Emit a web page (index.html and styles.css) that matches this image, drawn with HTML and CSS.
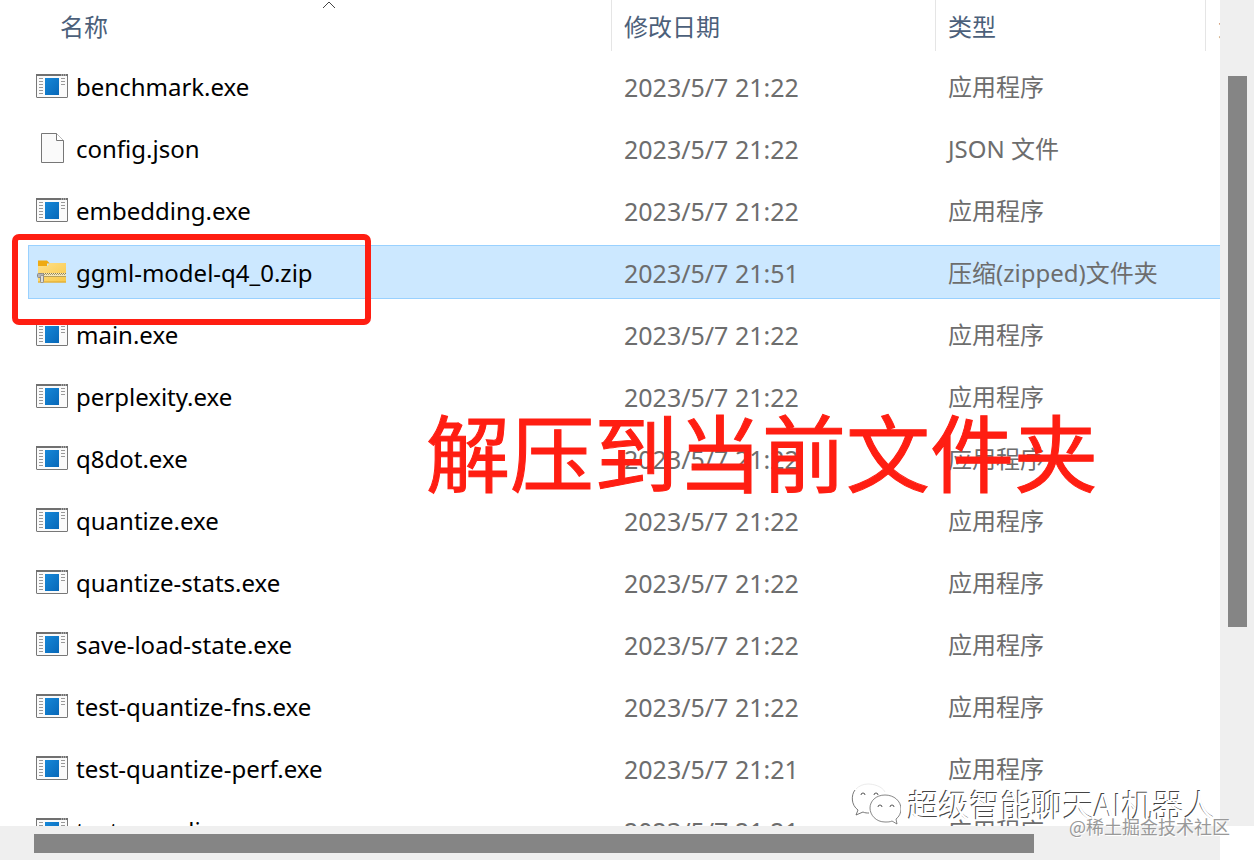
FILE: index.html
```html
<!DOCTYPE html>
<html lang="zh-CN">
<head>
<meta charset="utf-8">
<title>文件列表</title>
<link rel="stylesheet" href="styles.css">
</head>
<body>
<svg class="sprite" aria-hidden="true">
  <defs>
    <linearGradient id="blue" x1="0" y1="0" x2="1" y2="1"><stop offset="0" stop-color="#1688d9"/><stop offset="1" stop-color="#0868b8"/></linearGradient>
    <linearGradient id="gold" x1="0" y1="0" x2="1" y2="1"><stop offset="0" stop-color="#ffe08a"/><stop offset="1" stop-color="#f8c849"/></linearGradient>
    <symbol id="exe" viewBox="0 0 32 32">
      <rect x="0.5" y="4.5" width="31" height="23" rx="0.5" fill="#fafafa" stroke="#777"/>
      <path d="M0 5h32" stroke="#707070" stroke-width="2"/>
      <path d="M25 5h1M27 5h1M29 5h1" stroke="#ddd"/>
      <path d="M3 8.500h4M3 11.500h4M3 14.500h4M3 17.500h4M3 20.500h4M3 23.500h4M25 8.500h4M25 11.500h4M25 14.500h4" stroke="#999"/>
      <rect x="9" y="8" width="14" height="17" fill="url(#blue)"/>
    </symbol>
    <symbol id="doc" viewBox="0 0 32 32">
      <path d="M5.500 1.500h15l7 7v22h-22z" fill="#fafafa" stroke="#777"/>
      <path d="M20.500 1.500v7h7" fill="#fff" stroke="#777"/>
    </symbol>
    <symbol id="zip" viewBox="0 0 32 32">
      <path d="M2 4.500h9l3 3h-3v5H2z" fill="#efaa12"/>
      <path d="M2 10h9l3-3h16v19.500H2z" fill="url(#gold)"/>
      <path d="M2 26h28" stroke="#dba52c"/>
      <path d="M6 19h24" stroke="#f4e7bd" stroke-width="4"/>
      <path d="M7 17.500h23" stroke="#8d8054" stroke-dasharray="1 1"/>
      <path d="M8 18.500h22" stroke="#a89a68" stroke-dasharray="1 1"/>
      <path d="M7 20.500h23" stroke="#b6a15c"/>
      <rect x="1.500" y="17.500" width="6" height="4" rx="1" fill="#b5b5b5" stroke="#8a8a8a"/>
      <rect x="4.500" y="19.500" width="3" height="7" rx="1" fill="#ddd" stroke="#8a8a8a"/>
    </symbol>
  </defs>
</svg>
<main class="window">
  <section class="pane">
    <table class="files">
      <colgroup><col><col class="col-date"><col class="col-type"><col class="col-size"></colgroup>
      <thead>
        <tr>
          <th><div class="head head-name">名称<svg class="sort" viewBox="0 0 14 8" aria-hidden="true"><path d="M1 7l6-6 6 6" fill="none" stroke="#444"/></svg></div></th>
          <th><div class="head">修改日期</div></th>
          <th><div class="head">类型</div></th>
          <th><div class="head">大小</div></th>
        </tr>
      </thead>
      <tbody>
        <tr><td><div class="cell name"><svg class="icon"><use href="#exe"/></svg>benchmark.exe</div></td><td><div class="cell date">2023/5/7 21:22</div></td><td><div class="cell">应用程序</div></td><td><div class="cell"></div></td></tr>
        <tr><td><div class="cell name"><svg class="icon"><use href="#doc"/></svg>config.json</div></td><td><div class="cell date">2023/5/7 21:22</div></td><td><div class="cell">JSON 文件</div></td><td><div class="cell"></div></td></tr>
        <tr><td><div class="cell name"><svg class="icon"><use href="#exe"/></svg>embedding.exe</div></td><td><div class="cell date">2023/5/7 21:22</div></td><td><div class="cell">应用程序</div></td><td><div class="cell"></div></td></tr>
        <tr class="selected"><td><div class="cell name"><svg class="icon"><use href="#zip"/></svg>ggml-model-q4_0.zip<span class="marker"></span></div></td><td><div class="cell date">2023/5/7 21:51</div></td><td><div class="cell">压缩(zipped)文件夹</div></td><td><div class="cell"></div></td></tr>
        <tr><td><div class="cell name"><svg class="icon"><use href="#exe"/></svg>main.exe</div></td><td><div class="cell date">2023/5/7 21:22</div></td><td><div class="cell">应用程序</div></td><td><div class="cell"></div></td></tr>
        <tr><td><div class="cell name"><svg class="icon"><use href="#exe"/></svg>perplexity.exe</div></td><td><div class="cell date">2023/5/7 21:22</div></td><td><div class="cell">应用程序</div></td><td><div class="cell"></div></td></tr>
        <tr><td><div class="cell name"><svg class="icon"><use href="#exe"/></svg>q8dot.exe</div></td><td><div class="cell date">2023/5/7 21:22</div></td><td><div class="cell">应用程序</div></td><td><div class="cell"></div></td></tr>
        <tr><td><div class="cell name"><svg class="icon"><use href="#exe"/></svg>quantize.exe</div></td><td><div class="cell date">2023/5/7 21:22</div></td><td><div class="cell">应用程序</div></td><td><div class="cell"></div></td></tr>
        <tr><td><div class="cell name"><svg class="icon"><use href="#exe"/></svg>quantize-stats.exe</div></td><td><div class="cell date">2023/5/7 21:22</div></td><td><div class="cell">应用程序</div></td><td><div class="cell"></div></td></tr>
        <tr><td><div class="cell name"><svg class="icon"><use href="#exe"/></svg>save-load-state.exe</div></td><td><div class="cell date">2023/5/7 21:22</div></td><td><div class="cell">应用程序</div></td><td><div class="cell"></div></td></tr>
        <tr><td><div class="cell name"><svg class="icon"><use href="#exe"/></svg>test-quantize-fns.exe</div></td><td><div class="cell date">2023/5/7 21:22</div></td><td><div class="cell">应用程序</div></td><td><div class="cell"></div></td></tr>
        <tr><td><div class="cell name"><svg class="icon"><use href="#exe"/></svg>test-quantize-perf.exe</div></td><td><div class="cell date">2023/5/7 21:21</div></td><td><div class="cell">应用程序</div></td><td><div class="cell"></div></td></tr>
        <tr><td><div class="cell name"><svg class="icon"><use href="#exe"/></svg>test-sampling.exe</div></td><td><div class="cell date">2023/5/7 21:21</div></td><td><div class="cell">应用程序</div></td><td><div class="cell"></div></td></tr>
      </tbody>
    </table>
  </section>
  <div class="track track-v"><div class="thumb"></div></div>
  <div class="track track-h"><div class="thumb"></div></div>
  <p class="callout">解压到当前文件夹</p>
  <div class="brand">
    <svg class="brand-logo" viewBox="0 0 50 42" aria-hidden="true">
      <g fill="none" stroke="#555">
        <path d="M19 1C8 1 1 8 1 16c0 5 2 9 6 12l-2 5 7-3c3 1 5 1 8 1l18-18C35 6 28 1 19 1z" fill="#fff" stroke="none"/>
        <path d="M4 7C0 12 0 22 7 27l-2 5 7-3c2 1 4 1 6 1" stroke-width="0.8"/>
        <path d="M5 6C8 3 12 1 17 1s14 2 17 8" stroke="#ddd" stroke-width="0.6"/>
        <path d="M34 12c-9 0-15 6-15 13s6 14 15 14c3 0 5 0 7-1l5 3-1-5c3-2 5-6 5-10 0-8-7-14-16-14z" fill="#fff" stroke-width="0.7"/>
        <path d="M10 12a2 2 0 1 1 4 0M23 12a2 2 0 1 1 4 0M27 24a2 2 0 1 1 4 0M39 24a2 2 0 1 1 4 0"/>
      </g>
    </svg>
    <span>超级智能聊天AI机器人</span>
  </div>
  <p class="credit">@稀土掘金技术社区</p>
</main>
</body>
</html>
```
FILE: styles.css
```css
* { box-sizing: border-box; }
body {
  margin: 0;
  background: #fff;
  color: #6d6d6d;
  font: 24px/36px "Noto Sans", "Noto Sans CJK SC", sans-serif;
}
p { margin: 0; }
.sprite { position: absolute; width: 0; height: 0; }
.window {
  position: relative;
  display: grid;
  grid-template-columns: minmax(0, 1fr) 34px;
  grid-template-rows: minmax(0, 1fr) 34px;
  height: 100vh;
  overflow: hidden;
}
.pane { overflow: hidden; padding-left: 28px; }
.files { width: 100%; table-layout: fixed; border-collapse: collapse; }
.col-date { width: 324px; }
.col-type { width: 270px; }
.col-size { width: 15px; }
th { padding: 0 0 4px; font-weight: 400; text-align: left; }
td { padding: 4px 0; }
.head {
  height: 51px;
  padding: 9px 0 0 12px;
  overflow: hidden;
  border-left: 1px solid #e5e5e5;
  color: #4c607a;
  white-space: nowrap;
}
.head-name { position: relative; padding-left: 32px; border-left: 0; }
.sort { position: absolute; top: 1px; left: 294px; width: 14px; height: 8px; }
.cell {
  display: flex;
  align-items: center;
  height: 54px;
  padding: 2px 0 0 13px;
  border: solid transparent;
  border-width: 1px 0;
  white-space: nowrap;
}
.date { font-size: 25px; }
.name { position: relative; gap: 8px; padding-left: 8px; color: #000; }
.icon { flex: none; width: 32px; height: 32px; margin-bottom: 2px; }
.selected .cell { background: #cce8ff; border-color: #99d1ff; }
.selected .name { border-left: 1px solid #99d1ff; padding-left: 7px; }
.marker {
  position: absolute;
  z-index: 1;
  top: -12px;
  left: -17px;
  width: 359px;
  height: 91px;
  border: 6px solid #ff1e12;
  border-radius: 7px;
}
.track { display: flex; background: #efefef; }
.track-v { justify-content: center; padding: 76px 0 0 1px; }
.track-v .thumb { width: 19px; height: 73.5%; background: #858585; }
.track-h { align-items: center; padding-left: 34px; }
.track-h .thumb { width: 84.3%; height: 19px; background: #858585; }
.callout {
  position: absolute;
  top: 400px;
  left: 426px;
  color: #ff1e12;
  font: 84px/100px "Noto Sans CJK SC", sans-serif;
  -webkit-text-stroke: 1px #ff1e12;
  white-space: nowrap;
}
.brand {
  position: absolute;
  right: 39px;
  bottom: 35px;
  display: flex;
  align-items: center;
  gap: 7px;
  color: #fff;
  font: 31px/42px "Noto Sans CJK SC", sans-serif;
  text-shadow: -1px -1px 0 #444;
  white-space: nowrap;
}
.brand-logo { width: 50px; height: 42px; }
.credit {
  position: absolute;
  right: 24px;
  bottom: 22px;
  color: #999;
  font: 18px/24px "Noto Sans CJK SC", sans-serif;
  text-shadow: 1px 1px 0 #fff;
}
```
